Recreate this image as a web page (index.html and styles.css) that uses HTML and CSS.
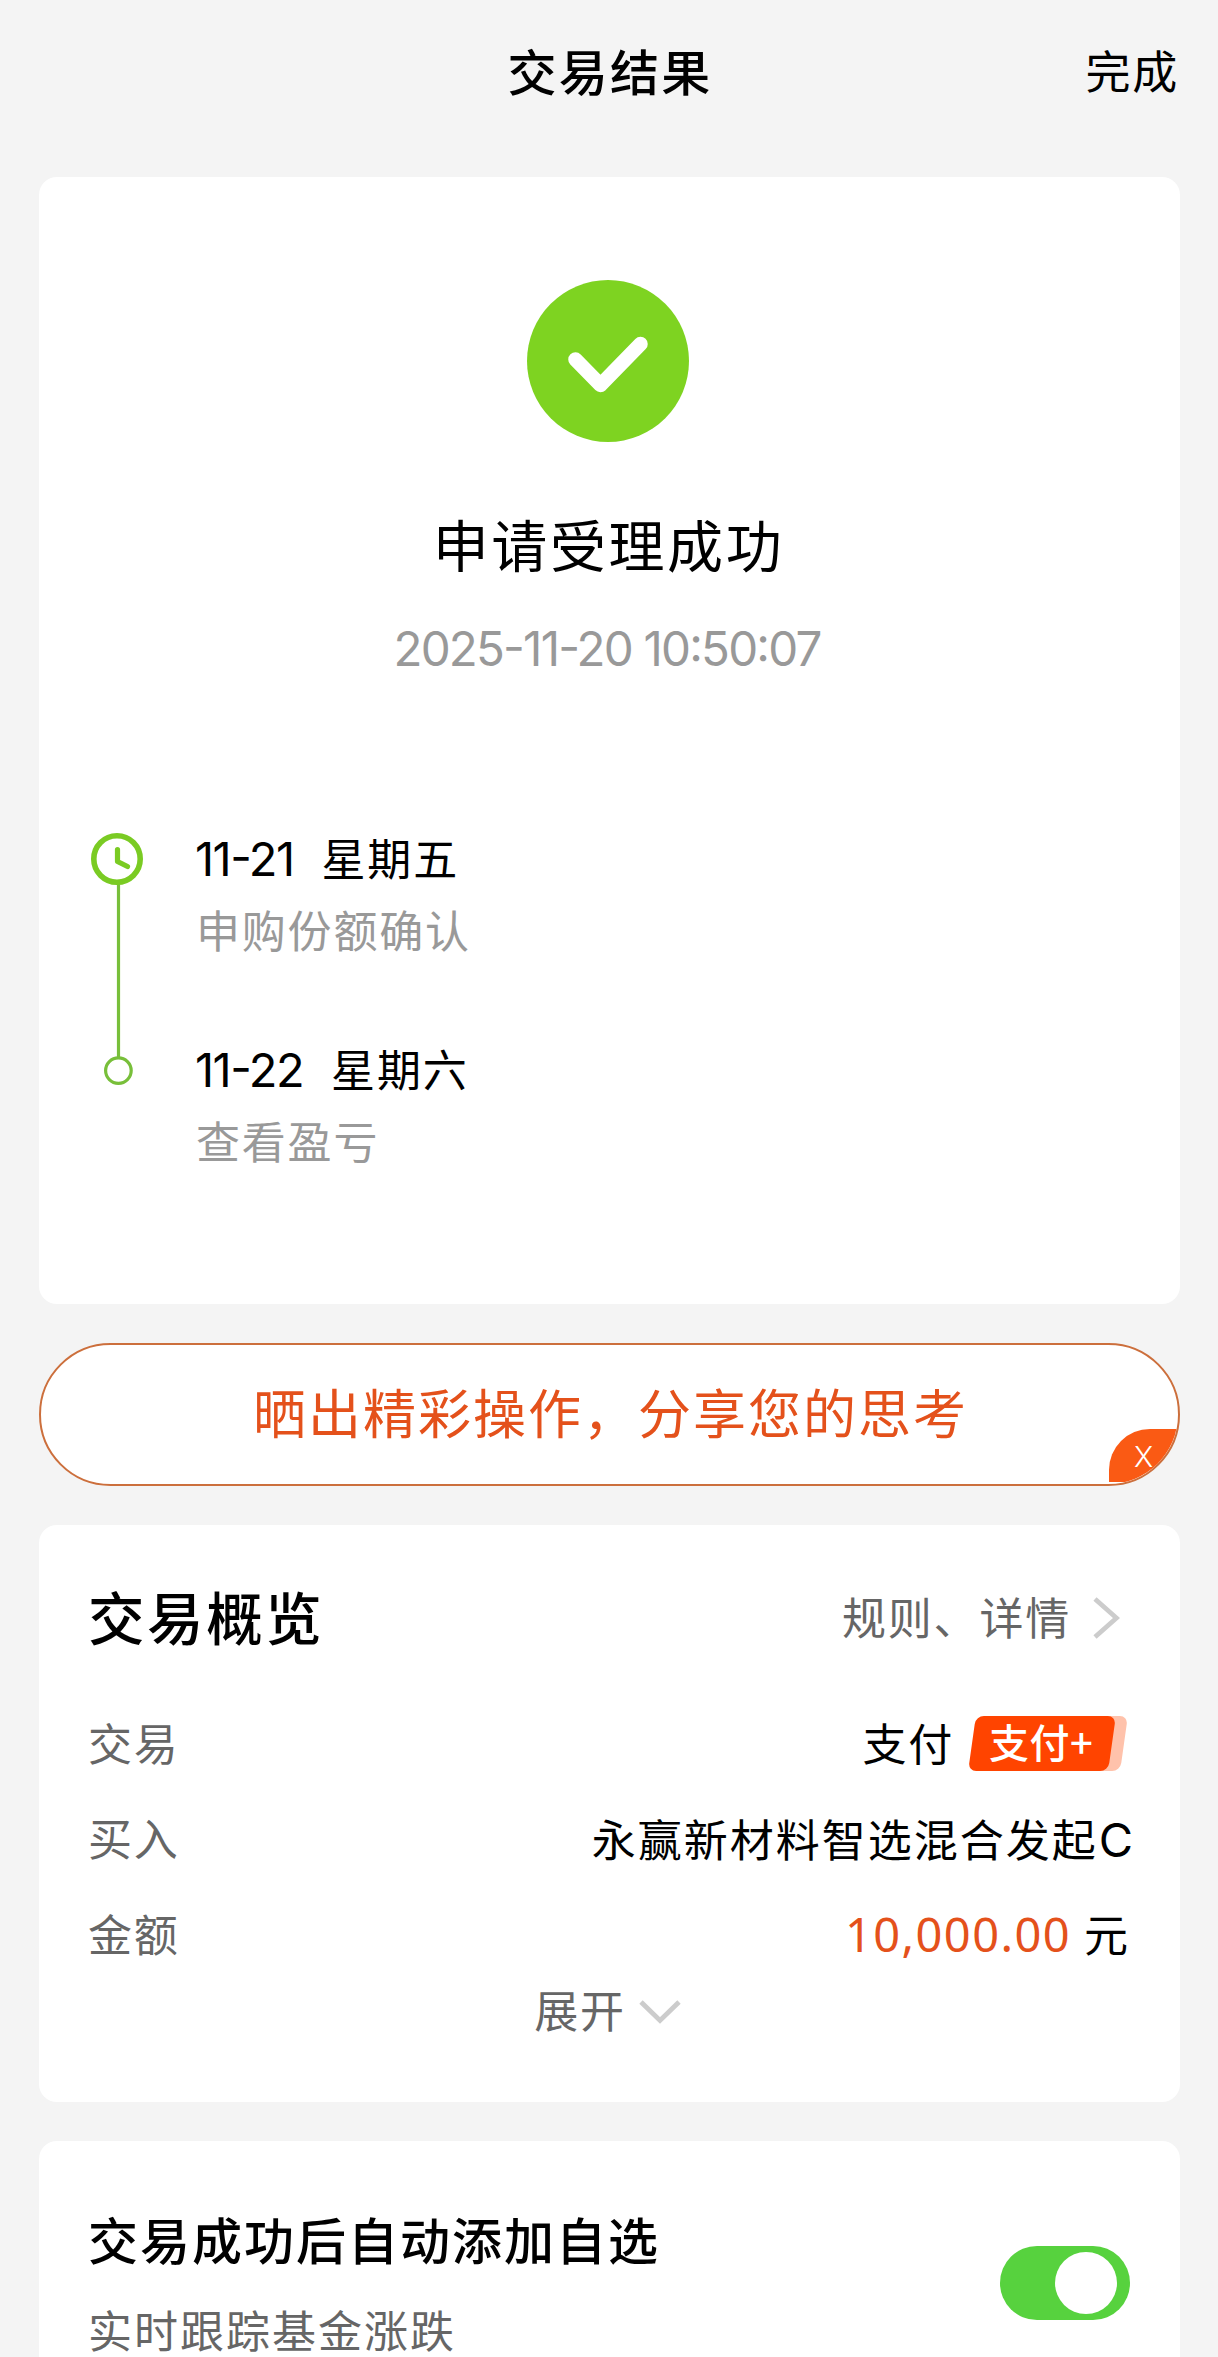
FILE: index.html
```html
<!DOCTYPE html>
<html lang="zh-CN">
<head>
<meta charset="utf-8">
<title>交易结果</title>
<link rel="stylesheet" href="styles.css">
</head>
<body>
<header class="topbar">
  <h1 class="topbar-title">交易结果</h1>
  <a class="topbar-done">完成</a>
</header>
<main class="content">
  <section class="card result">
    <svg class="result-icon" viewBox="0 0 162 162">
      <circle cx="81" cy="81" r="81" fill="#7ed321"/>
      <path d="M48.5 79.5L73.5 105L113.5 64" fill="none" stroke="#fff" stroke-width="14.5" stroke-linecap="round" stroke-linejoin="round"/>
    </svg>
    <h2 class="result-title">申请受理成功</h2>
    <p class="result-time">2025-11-20 10:50:07</p>
    <div class="timeline">
      <svg class="timeline-rail" viewBox="0 0 60 272">
        <path d="M28.5 63V237" stroke="#78bf3a" stroke-width="3.2"/>
        <circle cx="27" cy="39" r="23.2" fill="#fff" stroke="#7acb23" stroke-width="5.6"/>
        <path d="M27.5 29.5V41.5L37.5 46.5" fill="none" stroke="#7acb23" stroke-width="5.2" stroke-linecap="round" stroke-linejoin="round"/>
        <circle cx="28.4" cy="250.6" r="12.8" fill="#fff" stroke="#78bf3a" stroke-width="3.2"/>
      </svg>
      <ul class="steps">
        <li class="step">
          <p class="step-date"><span class="num">11-21</span><span>星期五</span></p>
          <p class="step-desc">申购份额确认</p>
        </li>
        <li class="step">
          <p class="step-date"><span class="num">11-22</span><span>星期六</span></p>
          <p class="step-desc">查看盈亏</p>
        </li>
      </ul>
    </div>
  </section>

  <section class="share">
    <span class="share-text">晒出精彩操作，分享您的思考</span>
    <span class="share-close">X</span>
  </section>

  <section class="card overview">
    <div class="overview-head">
      <h2 class="overview-title">交易概览</h2>
      <a class="overview-link">规则、详情
        <svg class="chevron-right" viewBox="0 0 28 44"><path d="M3 3L24.5 22L3 41" fill="none" stroke="#ccc" stroke-width="4.8"/></svg>
      </a>
    </div>
    <dl class="rows">
      <div class="row">
        <dt>交易</dt>
        <dd>支付<span class="badge"><span class="badge-label">支付+</span></span></dd>
      </div>
      <div class="row">
        <dt>买入</dt>
        <dd class="fund">永赢新材料智选混合发起<span class="num">C</span></dd>
      </div>
      <div class="row">
        <dt>金额</dt>
        <dd class="sum"><span class="amount">10,000.00</span>元</dd>
      </div>
    </dl>
    <div class="expand">展开
      <svg class="chevron-down" viewBox="0 0 42 24"><path d="M2 2L21 20.5L40 2" fill="none" stroke="#ccc" stroke-width="4.8"/></svg>
    </div>
  </section>

  <section class="card watch">
    <div>
      <h2 class="watch-title">交易成功后自动添加自选</h2>
      <p class="watch-desc">实时跟踪基金涨跌</p>
    </div>
    <span class="switch"><span class="switch-knob"></span></span>
  </section>
</main>
</body>
</html>
```
FILE: styles.css
```css
* { box-sizing: border-box; margin: 0; padding: 0; }

body {
  height: 2357px;
  overflow: hidden;
  background: #f4f4f4;
  color: #000;
  font-family: "Noto Sans CJK SC", sans-serif;
  font-size: 44px;
  letter-spacing: 1.8px;
}

.num { font-family: Inter, sans-serif; font-feature-settings: "case"; line-height: 1; }

.topbar {
  display: grid;
  grid-template-columns: 1fr auto 1fr;
  align-items: center;
  height: 138px;
  padding: 0 39px 0 41px;
}
.topbar-title { grid-column: 2; font-size: 49px; font-weight: 500; letter-spacing: 2.2px; }
.topbar-done { justify-self: end; font-size: 45px; }

.content {
  display: flex;
  flex-direction: column;
  gap: 39px;
  padding: 39px 38px 0 39px;
}
.card { background: #fff; border-radius: 18px; }

.result {
  display: flex;
  flex-direction: column;
  align-items: center;
  height: 1127px;
  padding: 103px 52px 0 50px;
}
.result-icon { width: 162px; height: 162px; margin-right: 1px; }
.result-title {
  margin-top: 66px;
  font-size: 56px;
  font-weight: 400;
  line-height: 70px;
  letter-spacing: 2.6px;
}
.result-time {
  margin-top: 41px;
  padding-right: 3px;
  color: #999;
  font-family: Inter, sans-serif;
  font-feature-settings: "case";
  font-size: 47.5px;
  line-height: 60px;
  letter-spacing: -1.8px;
}

.timeline { display: flex; align-self: stretch; gap: 46px; margin-top: 141px; padding-left: 1px; }
.timeline-rail { width: 60px; height: 272px; }
.steps { display: flex; flex-direction: column; gap: 67px; padding-top: 1px; margin-left: -1px; list-style: none; }
.step { line-height: 72px; }
.step-date { display: flex; align-items: baseline; gap: 28px; }
.step-date .num { font-size: 47px; letter-spacing: -1.5px; }
.step-desc { padding-left: 1px; color: #999; }

.share {
  position: relative;
  display: flex;
  align-items: center;
  justify-content: center;
  height: 143px;
  padding: 0 0 8px 2px;
  overflow: hidden;
  background: #fff;
  border: 2px solid #cc6f3c;
  border-radius: 72px;
}
.share-text { color: #e4511b; font-size: 53px; letter-spacing: 2px; }
.share-close {
  position: absolute;
  right: 0;
  bottom: 2px;
  width: 69px;
  height: 53px;
  padding-left: 25px;
  background: #fa5a14;
  border-top-left-radius: 41px;
  color: #fff;
  font-family: Inter, sans-serif;
  font-size: 29px;
  font-weight: 300;
  line-height: 55px;
}

.overview { height: 577px; padding: 50px 50px 0 49px; }
.overview-head {
  display: flex;
  align-items: center;
  justify-content: space-between;
  height: 80px;
  padding-right: 10px;
}
.overview-title { font-size: 56.5px; font-weight: 500; letter-spacing: 2.6px; }
.overview-link { display: flex; align-items: center; gap: 21px; margin-top: 2px; color: #666; }
.chevron-right { width: 28px; height: 44px; margin-top: 3px; }

.rows { margin-top: 39px; }
.row { display: flex; align-items: center; justify-content: space-between; height: 95.5px; }
.row dt { color: #666; }
.row dd { display: flex; align-items: center; }
.row dd.fund, .row dd.sum { align-items: baseline; letter-spacing: 2px; }
.row dd.fund { margin-right: -3px; padding-top: 2px; }
.row dd.fund .num { margin-left: 1px; font-size: 47px; letter-spacing: 0; }
.amount {
  margin-right: 13px;
  color: #e4511b;
  font-family: "Noto Sans", sans-serif;
  font-size: 47px;
  line-height: 1;
  letter-spacing: 1.4px;
}

.badge {
  position: relative;
  z-index: 0;
  width: 148px;
  height: 55px;
  margin: 3px 14px 0 14px;
  color: #fff;
  font-size: 40px;
  font-weight: 500;
  line-height: 51px;
  letter-spacing: 0.5px;
}
.badge::before, .badge::after {
  content: "";
  position: absolute;
  z-index: -1;
  top: 0;
  left: 4px;
  width: 140px;
  height: 55px;
  border-radius: 8px;
  transform: skewX(-8deg);
  background: #ff4400;
}
.badge::before { left: 16px; background: #ffc2ab; }
.badge-label { display: block; padding-left: 21px; white-space: nowrap; }

.expand {
  display: flex;
  align-items: center;
  justify-content: center;
  gap: 13px;
  height: 56px;
  padding-right: 3px;
  color: #666;
}
.chevron-down { width: 42px; height: 24px; margin-top: 7px; }

.watch {
  display: flex;
  align-items: flex-start;
  justify-content: space-between;
  padding: 52px 50px 0 49px;
}
.watch-title { font-size: 50px; font-weight: 500; line-height: 90px; letter-spacing: 2px; }
.watch-desc { height: 74px; color: #666; line-height: 93px; letter-spacing: 2px; }
.switch {
  display: flex;
  justify-content: flex-end;
  align-items: center;
  width: 130px;
  height: 74px;
  margin-top: 53px;
  padding-right: 13px;
  background: #57d23e;
  border-radius: 37px;
}
.switch-knob { width: 62px; height: 62px; background: #fff; border-radius: 50%; }

/* The last card runs on past the bottom of the screen. */
.watch { height: 260px; border-radius: 18px 18px 0 0; }
```
